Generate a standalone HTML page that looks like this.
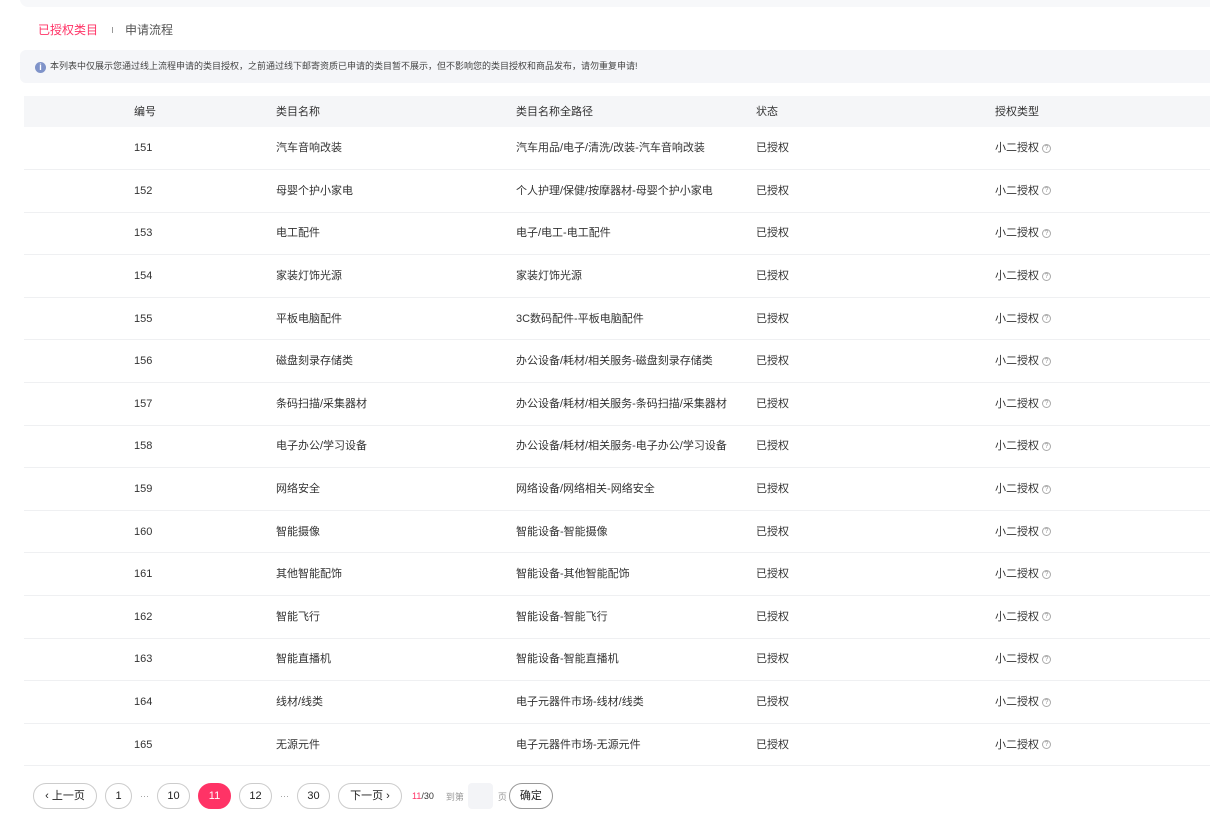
<!DOCTYPE html>
<html><head><meta charset="utf-8"><style>
*{margin:0;padding:0;box-sizing:border-box}
body{width:1210px;height:813px;background:#fff;font-family:"Liberation Sans","Noto Sans CJK SC",sans-serif;color:#333;font-size:11px;position:relative;overflow:hidden}
.top{position:absolute;left:20px;top:-10px;width:1200px;height:17px;background:#f7f8fa;border-radius:8px}
.tabs{position:absolute;left:38px;top:23px;font-size:12px;line-height:14px;color:#555}
.tabs .a{color:#ff3366}
.tabs .sep{display:inline-block;width:1px;height:6px;background:#999;margin:0 12px 1px 14px;vertical-align:middle}
.notice{position:absolute;left:20px;top:50px;width:1200px;height:33px;background:#f5f6f9;border-radius:6px;font-size:9px;color:#444;line-height:33px;padding-left:15px}
.notice i{display:inline-block;width:11px;height:11px;border-radius:50%;background:#7f93c9;color:#fff;font-style:normal;font-size:9px;line-height:11px;text-align:center;vertical-align:-1px;margin-right:4px;font-weight:bold}
table{position:absolute;left:24px;top:96px;width:1186px;border-collapse:collapse}
th{background:#f5f6f8;height:31px;font-weight:normal;text-align:left;font-size:11px;color:#333;line-height:14px}
td{height:42.6px;border-bottom:1px solid #eff0f2;font-size:11px;line-height:14px;vertical-align:middle}
td span.t{display:inline-block;vertical-align:middle}
.c1{padding-left:110px;width:252px}.c2{width:240px}.c3{width:240px}.c4{width:239px}
.q{display:inline-block;width:9px;height:9px;border:1px solid #aaa;border-radius:50%;font-size:7px;color:#999;text-align:center;line-height:7px;margin-left:3px;vertical-align:middle}
.pg{position:absolute;top:783px;left:33px;display:flex;align-items:center;font-size:11px}
.b{height:26px;border:1px solid #ccc;border-radius:13px;line-height:24px;text-align:center;margin-right:8px;background:#fff;color:#222}
.dots{color:#999;margin-right:8px;font-size:9px}
.on{background:#ff3366;border-color:#ff3366;color:#fff}
</style></head><body>
<div class="top"></div>
<div class="tabs"><span class="a">已授权类目</span><span class="sep"></span>申请流程</div>
<div class="notice"><i>i</i>本列表中仅展示您通过线上流程申请的类目授权，之前通过线下邮寄资质已申请的类目暂不展示，但不影响您的类目授权和商品发布，请勿重复申请!</div>
<table>
<tr><th class="c1">编号</th><th class="c2">类目名称</th><th class="c3">类目名称全路径</th><th class="c4">状态</th><th>授权类型</th></tr>
<tr><td class="c1">151</td><td>汽车音响改装</td><td>汽车用品/电子/清洗/改装-汽车音响改装</td><td>已授权</td><td>小二授权<span class="q">?</span></td></tr>
<tr><td class="c1">152</td><td>母婴个护小家电</td><td>个人护理/保健/按摩器材-母婴个护小家电</td><td>已授权</td><td>小二授权<span class="q">?</span></td></tr>
<tr><td class="c1">153</td><td>电工配件</td><td>电子/电工-电工配件</td><td>已授权</td><td>小二授权<span class="q">?</span></td></tr>
<tr><td class="c1">154</td><td>家装灯饰光源</td><td>家装灯饰光源</td><td>已授权</td><td>小二授权<span class="q">?</span></td></tr>
<tr><td class="c1">155</td><td>平板电脑配件</td><td>3C数码配件-平板电脑配件</td><td>已授权</td><td>小二授权<span class="q">?</span></td></tr>
<tr><td class="c1">156</td><td>磁盘刻录存储类</td><td>办公设备/耗材/相关服务-磁盘刻录存储类</td><td>已授权</td><td>小二授权<span class="q">?</span></td></tr>
<tr><td class="c1">157</td><td>条码扫描/采集器材</td><td>办公设备/耗材/相关服务-条码扫描/采集器材</td><td>已授权</td><td>小二授权<span class="q">?</span></td></tr>
<tr><td class="c1">158</td><td>电子办公/学习设备</td><td>办公设备/耗材/相关服务-电子办公/学习设备</td><td>已授权</td><td>小二授权<span class="q">?</span></td></tr>
<tr><td class="c1">159</td><td>网络安全</td><td>网络设备/网络相关-网络安全</td><td>已授权</td><td>小二授权<span class="q">?</span></td></tr>
<tr><td class="c1">160</td><td>智能摄像</td><td>智能设备-智能摄像</td><td>已授权</td><td>小二授权<span class="q">?</span></td></tr>
<tr><td class="c1">161</td><td>其他智能配饰</td><td>智能设备-其他智能配饰</td><td>已授权</td><td>小二授权<span class="q">?</span></td></tr>
<tr><td class="c1">162</td><td>智能飞行</td><td>智能设备-智能飞行</td><td>已授权</td><td>小二授权<span class="q">?</span></td></tr>
<tr><td class="c1">163</td><td>智能直播机</td><td>智能设备-智能直播机</td><td>已授权</td><td>小二授权<span class="q">?</span></td></tr>
<tr><td class="c1">164</td><td>线材/线类</td><td>电子元器件市场-线材/线类</td><td>已授权</td><td>小二授权<span class="q">?</span></td></tr>
<tr><td class="c1">165</td><td>无源元件</td><td>电子元器件市场-无源元件</td><td>已授权</td><td>小二授权<span class="q">?</span></td></tr>
</table>
<div class="pg">
<div class="b" style="width:64px">‹ 上一页</div>
<div class="b" style="width:27px">1</div><span class="dots">···</span>
<div class="b" style="width:33px">10</div>
<div class="b on" style="width:33px">11</div>
<div class="b" style="width:33px">12</div><span class="dots">···</span>
<div class="b" style="width:33px">30</div>
<div class="b" style="width:64px">下一页 ›</div>
<span style="font-size:9px;margin-right:12px;margin-left:2px"><span style="color:#ff3366">11</span>/30</span>
<span style="font-size:9px;color:#999;margin-right:4px">到第</span>
<div style="width:25px;height:26px;background:#f3f4f7;border-radius:4px;margin-right:5px"></div>
<span style="font-size:9px;color:#999;margin-right:2px">页</span>
<div class="b" style="width:44px;border-color:#999">确定</div>
</div>
</body></html>
